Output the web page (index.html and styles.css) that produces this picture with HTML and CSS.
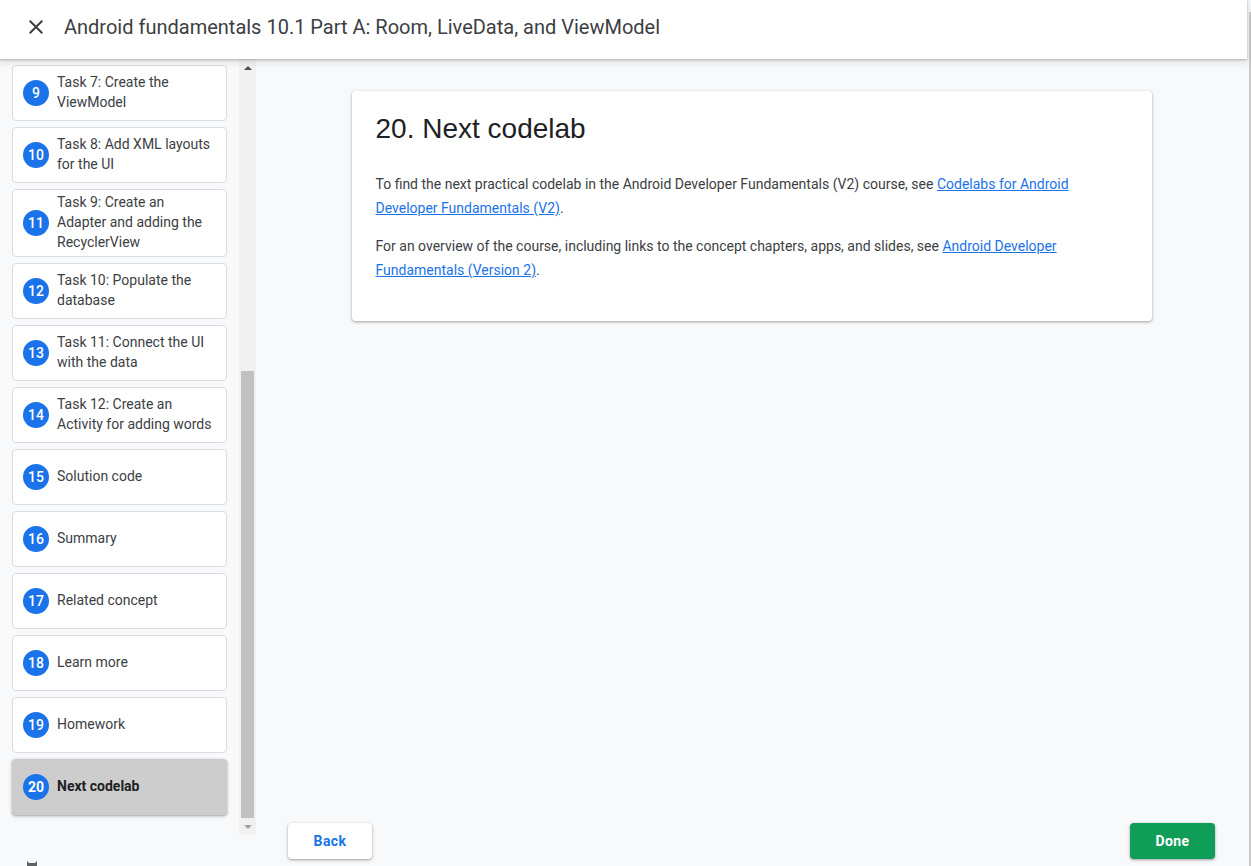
FILE: index.html
```html
<!DOCTYPE html>
<html lang="en">
<head>
<meta charset="utf-8">
<title>Android fundamentals 10.1 Part A</title>
<link rel="stylesheet" href="styles.css">
</head>
<body>
<div class="page">
  <div class="app">
    <header class="topbar">
      <svg class="close" width="24" height="24" viewBox="0 0 24 24"><path d="M19 6.41L17.59 5 12 10.59 6.41 5 5 6.41 10.59 12 5 17.59 6.41 19 12 13.41 17.59 19 19 17.59 13.41 12z" fill="#3c4043"/></svg>
      <h1 class="title">Android fundamentals 10.1 Part A: Room, LiveData, and ViewModel</h1>
    </header>
    <div class="body">
      <aside class="sidebar">
        <div class="nav">
          <ol class="steps">
            <li class="step"><span class="num">9</span><span class="label">Task 7: Create the ViewModel</span></li>
            <li class="step"><span class="num">10</span><span class="label">Task 8: Add XML layouts for the UI</span></li>
            <li class="step"><span class="num">11</span><span class="label">Task 9: Create an Adapter and adding the RecyclerView</span></li>
            <li class="step"><span class="num">12</span><span class="label">Task 10: Populate the database</span></li>
            <li class="step"><span class="num">13</span><span class="label">Task 11: Connect the UI with the data</span></li>
            <li class="step"><span class="num">14</span><span class="label">Task 12: Create an Activity for adding words</span></li>
            <li class="step"><span class="num">15</span><span class="label">Solution code</span></li>
            <li class="step"><span class="num">16</span><span class="label">Summary</span></li>
            <li class="step"><span class="num">17</span><span class="label">Related concept</span></li>
            <li class="step"><span class="num">18</span><span class="label">Learn more</span></li>
            <li class="step"><span class="num">19</span><span class="label">Homework</span></li>
            <li class="step active"><span class="num">20</span><span class="label">Next codelab</span></li>
          </ol>
          <div class="vscroll">
            <div class="arrow-btn"><span class="arrow up"></span></div>
            <div class="track"><div class="thumb"></div></div>
            <div class="arrow-btn"><span class="arrow down"></span></div>
          </div>
        </div>
        <div class="sidebar-foot">
          <svg class="bug" width="12" height="6" viewBox="0 0 12 6"><path d="M1 1 L3 3 L9 3 L11 1 L11 6 L1 6 Z" fill="#5f6368"/></svg>
        </div>
      </aside>
      <main class="main">
        <div class="content">
          <section class="card">
            <h2 class="card-title">20. Next codelab</h2>
            <p>To find the next practical codelab in the Android Developer Fundamentals (V2) course, see <a href="#">Codelabs for Android Developer Fundamentals (V2)</a>.</p>
            <p>For an overview of the course, including links to the concept chapters, apps, and slides, see <a href="#">Android Developer Fundamentals (Version 2)</a>.</p>
          </section>
        </div>
        <div class="footer">
          <button class="btn back">Back</button>
          <button class="btn done">Done</button>
        </div>
      </main>
    </div>
  </div>
  <div class="outer-scroll"><div class="outer-thumb"></div></div>
</div>
</body>
</html>
```
FILE: styles.css
```css
* { box-sizing: border-box; }
html, body { margin: 0; padding: 0; }
body {
  background: #f8f9fa;
  font-family: Roboto, "Noto Sans", Arial, sans-serif;
  color: #3c4043;
  height: 866px;
  overflow: hidden;
}
.page { display: flex; height: 866px; }
.app { flex: 1; display: flex; flex-direction: column; min-width: 0; }
.outer-scroll { width: 4px; background: #f8f9fa; display: flex; flex-direction: column; padding-top: 12px; align-items: flex-end; }
.outer-thumb { width: 2px; flex: 1; background: #c9c9c9; }

.topbar {
  height: 59px;
  flex: none;
  background: #fff;
  display: flex;
  align-items: center;
  padding: 0 0 6px 24px;
  position: relative;
  z-index: 2;
  box-shadow: 0 1px 2px rgba(60,64,67,.3), 0 2px 6px 2px rgba(60,64,67,.12);
}
.close { flex: none; margin-top: 1px; }
.title {
  margin: 0 0 0 16px;
  font-size: 20px;
  font-weight: 400;
  color: #3c4043;
  line-height: 28px;
}

.body { flex: 1; display: flex; min-height: 0; }
.sidebar { width: 256px; flex: none; display: flex; flex-direction: column; }
.nav { height: 778px; display: flex; }
.steps {
  list-style: none;
  margin: 0;
  padding: 6px 12px 0 12px;
  width: 239px;
  display: flex;
  flex-direction: column;
  gap: 6px;
}
.step {
  min-height: 56px;
  background: #fff;
  border: 1px solid #dadce0;
  border-radius: 4px;
  display: flex;
  align-items: center;
  padding: 2px 10px;
  gap: 8px;
  font-size: 14px;
  line-height: 20px;
  color: #3c4043;
}
.label { margin-bottom: 2px; }
.num {
  flex: none;
  width: 26px;
  height: 26px;
  border-radius: 50%;
  background: #1a73e8;
  color: #fff;
  font-size: 14px;
  font-weight: 500;
  display: flex;
  align-items: center;
  justify-content: center;
}
.step.active {
  background: #cdcdcd;
  border-color: #cdcdcd;
  box-shadow: 0 1px 2px rgba(60,64,67,.3), 0 1px 3px 1px rgba(60,64,67,.15);
  font-weight: 700;
  color: #202124;
}
.step.active .num { font-weight: 700; }

.vscroll { width: 17px; background: #f1f1f1; display: flex; flex-direction: column; }
.arrow-btn { height: 17px; display: flex; align-items: center; justify-content: center; flex: none; }
.arrow { width: 0; height: 0; border-left: 4px solid transparent; border-right: 4px solid transparent; }
.arrow.up { border-bottom: 4px solid #505050; }
.arrow.down { border-top: 4px solid #a3a3a3; }
.track { flex: 1; display: flex; flex-direction: column; padding: 0 2px; }
.thumb { margin-top: 295px; flex: 1; background: #c1c1c1; }

.sidebar-foot { flex: 1; padding: 25px 0 0 26px; }
.bug { display: block; }

.main { flex: 1; display: flex; flex-direction: column; min-width: 0; }
.content { flex: 1; display: flex; justify-content: center; padding-top: 32px; }
.card {
  width: 800px;
  height: 230px;
  background: #fff;
  border-radius: 4px;
  padding: 22px 24px 24px;
  box-shadow: 0 1px 2px rgba(60,64,67,.3), 0 1px 3px 1px rgba(60,64,67,.15);
}
.card-title {
  margin: 0 0 27px;
  font-family: "Liberation Sans", Arial, sans-serif;
  font-size: 28px;
  font-weight: 400;
  line-height: 32px;
  color: #202124;
}
.card p {
  margin: 0 0 14px;
  font-size: 14px;
  line-height: 24px;
  color: #3c4043;
}
.card a { color: #1a73e8; text-decoration: underline; }

.footer { display: flex; justify-content: space-between; padding: 0 32px 7px; flex: none; }
.btn {
  height: 36px;
  border: none;
  border-radius: 4px;
  font-family: Roboto, Arial, sans-serif;
  font-size: 14px;
  font-weight: 700;
  letter-spacing: .4px;
  cursor: pointer;
}
.back {
  width: 84px;
  background: #fff;
  color: #1a73e8;
  box-shadow: 0 1px 2px rgba(60,64,67,.3), 0 1px 3px 1px rgba(60,64,67,.15);
}
.done {
  width: 85px;
  background: #0f9d58;
  color: #fff;
  box-shadow: 0 1px 2px rgba(60,64,67,.3), 0 1px 3px 1px rgba(60,64,67,.15);
}
```
